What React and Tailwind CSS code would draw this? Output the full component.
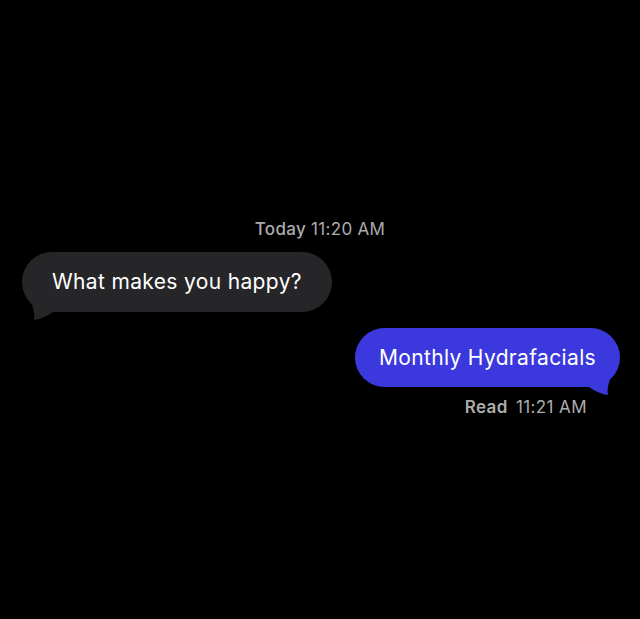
// Chat thread: one incoming and one outgoing message on black.

function Tail({ side, color }) {
  // Small curled tail drawn below the bubble's bottom corner.
  if (side === 'left') {
    return (
      <svg
        className="absolute left-[4px] bottom-[-10px]"
        width="40"
        height="30"
        viewBox="0 0 40 30"
      >
        <path d="M4 0 C4 10 10 20 8 28 C16 27 26 22 34 14 L22 0 Z" fill={color} />
      </svg>
    );
  }
  return (
    <svg
      className="absolute right-[4px] bottom-[-10px]"
      width="40"
      height="30"
      viewBox="0 0 40 30"
    >
      <path d="M36 0 C36 10 30 20 32 28 C24 27 14 22 6 14 L18 0 Z" fill={color} />
    </svg>
  );
}

export default function App() {
  return (
    <div
      className="min-h-screen bg-black flex flex-col pt-[218px]"
      style={{ fontFamily: 'Inter, "Liberation Sans", sans-serif' }}
    >
      <p className="text-center text-[17px] leading-[23px] tracking-[0.3px] text-[#acacac]">
        <span className="font-medium">Today</span> 11:20 AM
      </p>

      <div className="mt-[11px] ml-[22px] self-start relative">
        <Tail side="left" color="#262628" />
        <div className="relative h-[60px] rounded-[30px] bg-[#262628] px-[30px] flex items-center text-white text-[21px] tracking-[0.35px]">
          What makes you happy?
        </div>
      </div>

      <div className="mt-[16px] mr-[20px] self-end relative">
        <Tail side="right" color="#3b39dd" />
        <div className="relative h-[59px] rounded-[30px] bg-[#3b39dd] px-[24px] flex items-center text-white text-[21px] tracking-[0.35px]">
          Monthly Hydrafacials
        </div>
      </div>

      <p className="self-end mr-[53px] mt-[9px] text-[17px] leading-[23px] tracking-[0.4px] text-[#acacac]">
        <span className="font-semibold mr-[3px]">Read</span> 11:21 AM
      </p>
    </div>
  );
}
